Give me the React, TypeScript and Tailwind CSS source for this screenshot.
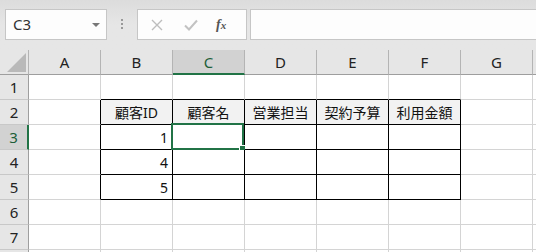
import { ReactNode } from "react";

const COLS = ["A", "B", "C", "D", "E", "F", "G", "H"];
const ROWS = [1, 2, 3, 4, 5, 6, 7, 8];

const HEADERS: Record<string, string> = {
  B: "顧客ID",
  C: "顧客名",
  D: "営業担当",
  E: "契約予算",
  F: "利用金額",
};

const IDS: Record<number, string> = { 3: "1", 4: "4", 5: "5" };

const inTable = (c: string) => ["B", "C", "D", "E", "F"].includes(c);

function Toolbar() {
  return (
    <div className="flex h-[50px] items-start bg-gradient-to-b from-[#dcdcdc] via-[#e6e6e6] to-[#e6e6e6]">
      {/* name box */}
      <div className="ml-[5px] mt-[9px] flex h-[31px] w-[102px] items-center justify-between border border-[#c6c6c6] bg-[#fdfdfd] pl-[7px] pr-[6px]">
        <span className="text-[15px] text-[#333]">C3</span>
        <span className="h-0 w-0 border-x-[4px] border-t-[4px] border-x-transparent border-t-[#777]" />
      </div>

      <div className="mt-[19px] flex w-[30px] flex-col items-center gap-[2px]">
        <span className="h-[2px] w-[2px] bg-[#999]" />
        <span className="h-[2px] w-[2px] bg-[#999]" />
        <span className="h-[2px] w-[2px] bg-[#999]" />
      </div>

      {/* cancel / enter / fx */}
      <div className="mt-[9px] flex h-[31px] w-[110px] items-center border border-[#c6c6c6] bg-[#fdfdfd]">
        <svg width="12" height="12" viewBox="0 0 12 12" className="ml-[13px]">
          <path d="M1 1 L11 11 M11 1 L1 11" stroke="#bdbdbd" strokeWidth="1.4" fill="none" />
        </svg>
        <svg width="14" height="12" viewBox="0 0 14 12" className="ml-[21px]">
          <path d="M1 6.5 L5 10.5 L13 1.5" stroke="#c2c2c2" strokeWidth="2" fill="none" />
        </svg>
        <span className="ml-[18px] font-['Liberation_Serif',serif] text-[14px] font-bold italic text-[#555]">
          f<span className="text-[11px]">x</span>
        </span>
      </div>

      <div className="ml-[3px] mt-[9px] h-[31px] flex-1 border-y border-l border-[#c6c6c6] bg-[#fdfdfd]" />
    </div>
  );
}

function ColumnHeader() {
  return (
    <div className="flex h-[25px]">
      <div className="relative h-[25px] w-[29px] shrink-0 border-r border-b border-r-[#b4b4b4] border-b-[#9e9e9e] bg-[#e6e6e6]">
        <svg width="19" height="19" viewBox="0 0 19 19" className="absolute left-[7px] top-[3px]">
          <path d="M19 0 L19 19 L0 19 Z" fill="#b9b9b9" />
        </svg>
      </div>
      {COLS.map((c) =>
        c === "C" ? (
          <div
            key={c}
            className="flex h-[25px] w-[72px] shrink-0 items-center justify-center border-r border-b-2 border-r-[#b4b4b4] border-b-[#217346] bg-[#d2d2d2] pt-[1px] text-[15px] text-[#1d5e38]"
          >
            {c}
          </div>
        ) : (
          <div
            key={c}
            className="flex h-[25px] w-[72px] shrink-0 items-center justify-center border-r border-b border-r-[#b4b4b4] border-b-[#9e9e9e] bg-[#e6e6e6] text-[15px] text-[#222]"
          >
            {c === "H" ? null : c}
          </div>
        ),
      )}
    </div>
  );
}

function Cell({ row, col }: { row: number; col: string }) {
  const rightBlack =
    (col === "A" && row >= 2 && row <= 5) || (inTable(col) && row >= 2 && row <= 5);
  const bottomBlack = inTable(col) && row >= 1 && row <= 5;
  const header = row === 2 && inTable(col);

  let content: ReactNode = null;
  if (header) content = HEADERS[col];
  if (col === "B" && IDS[row]) content = IDS[row];

  return (
    <div
      className={`relative flex h-[25px] w-[72px] shrink-0 items-center border-r border-b text-[14px] text-[#111] ${
        rightBlack ? "border-r-black" : "border-r-[#d4d4d4]"
      } ${bottomBlack ? "border-b-black" : "border-b-[#d4d4d4]"} ${
        header ? "justify-center bg-[#f2f2f2]" : "justify-end bg-white pr-[4px]"
      }`}
    >
      {content}
      {col === "C" && row === 3 && (
        <div className="absolute -left-[2px] -top-[2px] h-[27px] w-[73px] border-2 border-[#217346]">
          <span className="absolute -bottom-[4px] -right-[4px] h-[6px] w-[6px] bg-[#217346] ring-1 ring-white" />
        </div>
      )}
    </div>
  );
}

export default function App() {
  return (
    <div className="h-[252px] w-[536px] overflow-hidden bg-white font-['Noto_Sans','Noto_Sans_CJK_JP',sans-serif]">
      <Toolbar />
      <ColumnHeader />
      {ROWS.map((r) => (
        <div key={r} className="flex h-[25px]">
          {r === 3 ? (
            <div className="flex h-[25px] w-[29px] shrink-0 items-center justify-center border-r-2 border-b border-r-[#217346] border-b-[#c8c8c8] bg-[#d2d2d2] text-[15px] text-[#1d5e38]">
              {r}
            </div>
          ) : (
            <div className="flex h-[25px] w-[29px] shrink-0 items-center justify-center border-r border-b border-r-[#9e9e9e] border-b-[#c8c8c8] bg-[#e6e6e6] text-[15px] text-[#222]">
              {r === 8 ? null : r}
            </div>
          )}
          {COLS.map((c) => (
            <Cell key={c} row={r} col={c} />
          ))}
        </div>
      ))}
    </div>
  );
}
